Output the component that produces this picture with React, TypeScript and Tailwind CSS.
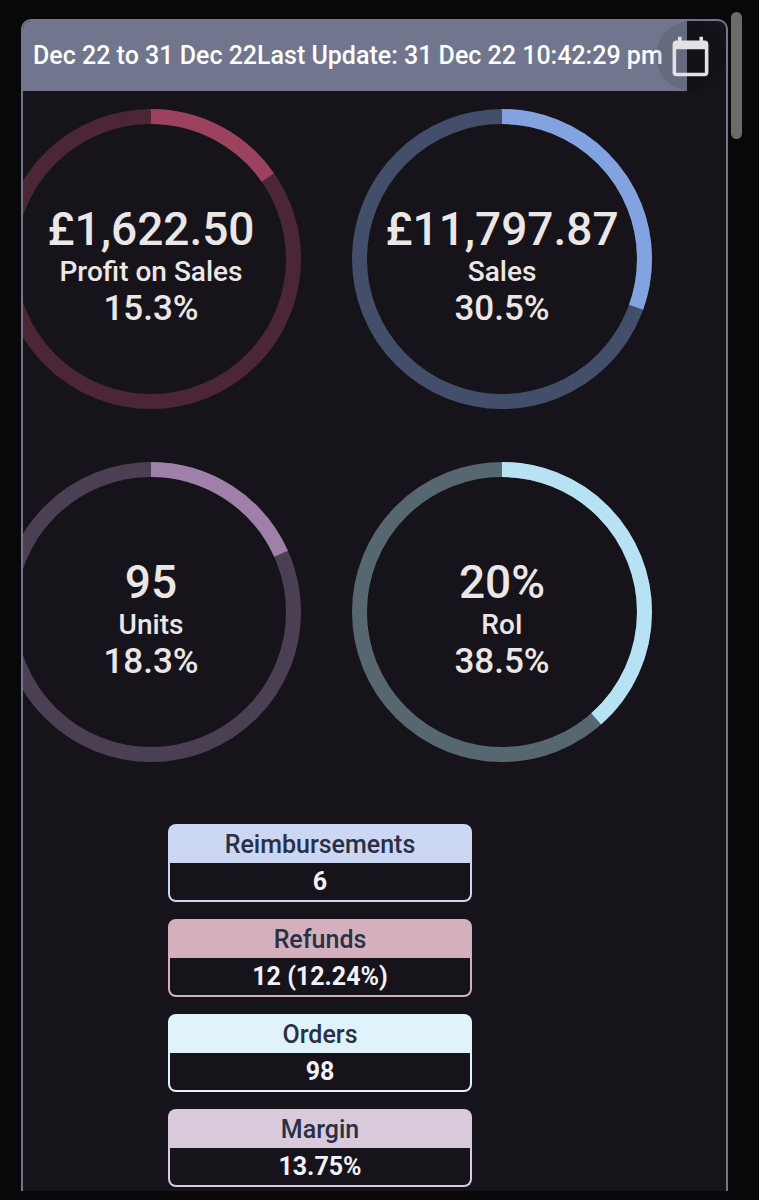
import { MdCalendarToday } from "react-icons/md";

type Metric = {
  label: string;
  value: string;
  percent: number;
  track: string;
  bar: string;
};

const metrics: Metric[] = [
  { label: "Profit on Sales", value: "£1,622.50", percent: 15.3, track: "stroke-[#4b2736]", bar: "stroke-[#9c425f]" },
  { label: "Sales", value: "£11,797.87", percent: 30.5, track: "stroke-[#434e6a]", bar: "stroke-[#83a2e0]" },
  { label: "Units", value: "95", percent: 18.3, track: "stroke-[#4b4053]", bar: "stroke-[#9f80a9]" },
  { label: "RoI", value: "20%", percent: 38.5, track: "stroke-[#566770]", bar: "stroke-[#b6e2f3]" },
];

const stats = [
  { label: "Reimbursements", value: "6", border: "border-[#cbd7f3]", fill: "bg-[#cbd7f3]" },
  { label: "Refunds", value: "12 (12.24%)", border: "border-[#d4b0bc]", fill: "bg-[#d4b0bc]" },
  { label: "Orders", value: "98", border: "border-[#e0f3fb]", fill: "bg-[#e0f3fb]" },
  { label: "Margin", value: "13.75%", border: "border-[#d8cadb]", fill: "bg-[#d8cadb]" },
];

function Ring({ metric }: { metric: Metric }) {
  return (
    <div className="grid size-[300px]">
      <svg viewBox="0 0 300 300" className="col-start-1 row-start-1 size-full -rotate-90" aria-hidden="true">
        <circle cx="150" cy="150" r="142.5" fill="none" strokeWidth="15" className={metric.track} />
        <circle
          cx="150"
          cy="150"
          r="142.5"
          fill="none"
          strokeWidth="15"
          pathLength={100}
          strokeDasharray={`${metric.percent} 100`}
          className={metric.bar}
        />
      </svg>
      <div className="col-start-1 row-start-1 flex flex-col items-center justify-center pt-[14px] font-medium whitespace-nowrap text-[#ece7e7]">
        <p className="text-[46px] leading-[50px]">{metric.value}</p>
        <p className="text-[28px] leading-9">{metric.label}</p>
        <p className="text-[35px] leading-[38px]">{metric.percent}%</p>
      </div>
    </div>
  );
}

export default function App() {
  return (
    <div className="flex min-h-screen items-start gap-[3px] bg-[#08080a] pt-3 pr-[17px] pb-2 pl-[21px] font-['Roboto','Liberation_Sans',sans-serif]">
      <main className="mt-[7px] min-w-0 flex-1 overflow-hidden rounded-t-[10px] border-2 border-b-0 border-[#71768e] bg-[#16141a] pb-1">
        <header className="mr-[39px] flex h-[70px] items-center bg-[#71768e] pl-[10px] text-[25px] font-medium whitespace-nowrap text-white">
          <span>Dec 22 to 31 Dec 22</span>
          <span>Last Update: 31 Dec 22 10:42:29 pm</span>
          <button
            type="button"
            aria-label="Choose dates"
            className="-ml-[7px] flex size-[70px] shrink-0 items-center justify-center rounded-full bg-black/10 text-[#e2e2e4]"
          >
            <MdCalendarToday className="size-[43px]" />
          </button>
        </header>

        <section className="mt-[18px] -ml-[22px] grid grid-cols-[300px_300px] gap-x-[51px] gap-y-[53px]">
          {metrics.map((metric) => (
            <Ring key={metric.label} metric={metric} />
          ))}
        </section>

        <section className="mt-[62px] ml-[145px] flex w-[304px] flex-col gap-[17px]">
          {stats.map((stat) => (
            <article key={stat.label} className="text-center">
              <h2 className={`rounded-t-lg pt-0.5 text-[25px] leading-[37px] font-medium text-[#2a3045] ${stat.fill}`}>
                {stat.label}
              </h2>
              <p
                className={`rounded-b-lg border-2 border-t-0 text-[25px] leading-[37px] font-bold text-[#f3f1fb] ${stat.border}`}
              >
                {stat.value}
              </p>
            </article>
          ))}
        </section>
      </main>
      <div className="h-[127px] w-[11px] shrink-0 rounded-full bg-[#6b6b6b]" />
    </div>
  );
}
